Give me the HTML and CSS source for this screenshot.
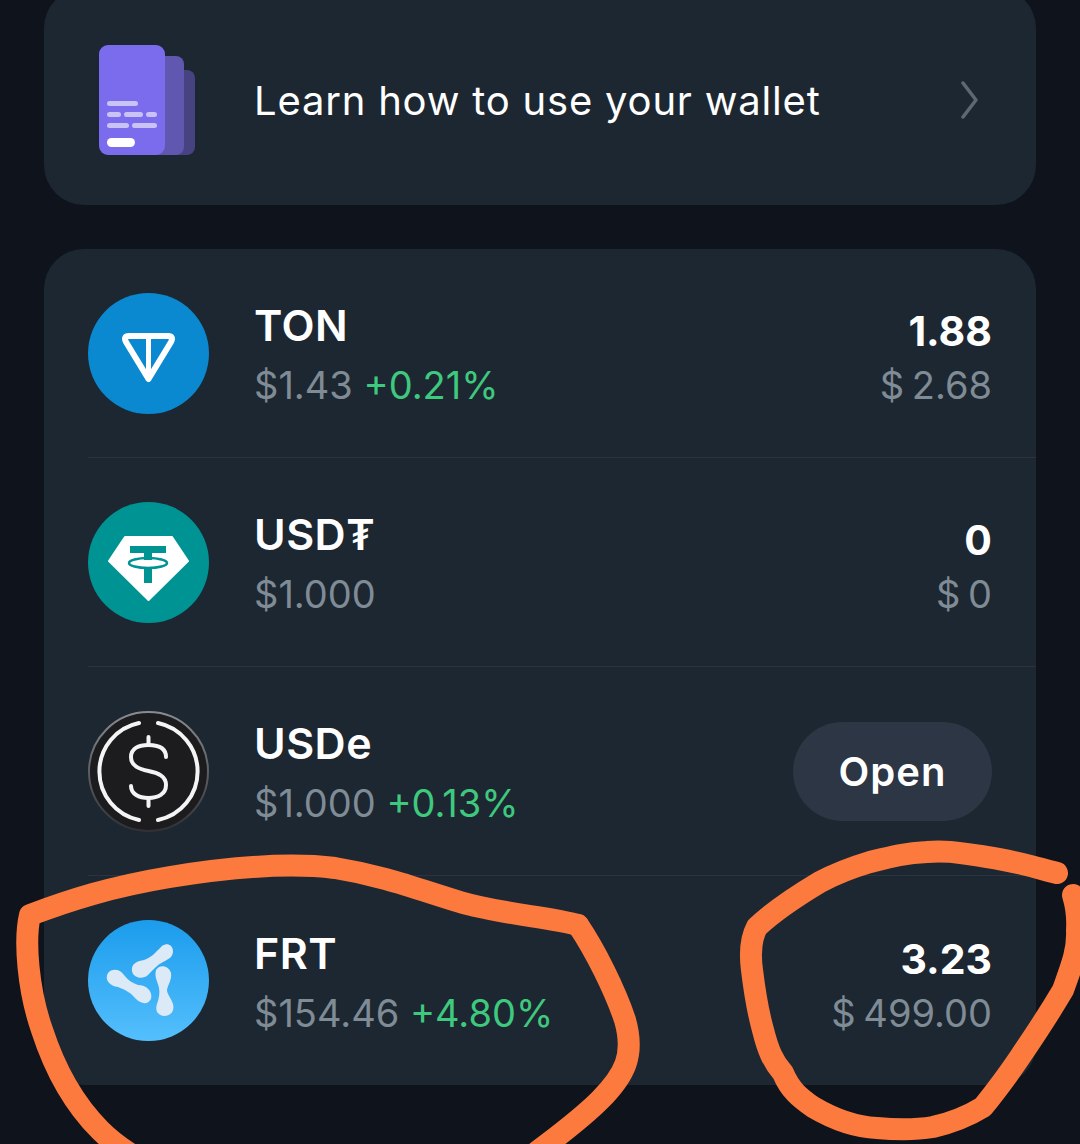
FILE: index.html
```html
<!DOCTYPE html>
<html lang="en">
<head>
    <meta charset="UTF-8">
    <meta name="viewport" content="width=device-width, initial-scale=1.0">
    <title>Wallet</title>
    <link rel="stylesheet" href="styles.css">
</head>
<body>
    <main class="page">
        <section class="card learn">
            <svg class="learn-icon" width="96" height="110" viewBox="0 0 96 110">
                <rect x="50" y="25" width="46" height="85" rx="8" fill="#474280"/>
                <rect x="40" y="11" width="45" height="99" rx="8" fill="#5f57b0"/>
                <rect x="0" y="0" width="66" height="110" rx="9" fill="#7b6cee"/>
                <g fill="#c9c3f5">
                    <rect x="8" y="56" width="31" height="5" rx="2.5"/>
                    <rect x="8" y="67" width="14" height="5" rx="2.5"/>
                    <rect x="25" y="67" width="19" height="5" rx="2.5"/>
                    <rect x="47" y="67" width="11" height="5" rx="2.5"/>
                    <rect x="8" y="78" width="22" height="5" rx="2.5"/>
                    <rect x="33" y="78" width="25" height="5" rx="2.5"/>
                </g>
                <rect x="8" y="93" width="28" height="9" rx="4.5" fill="#fff"/>
            </svg>
            <span class="learn-text">Learn how to use your wallet</span>
            <svg class="chevron" width="18" height="38" viewBox="0 0 18 38">
                <path d="M2 2 L15 19 L2 36" fill="none" stroke="#5d6873" stroke-width="3.500" stroke-linecap="round" stroke-linejoin="round"/>
            </svg>
        </section>

        <section class="card tokens">
            <div class="token">
                <svg class="token-icon" viewBox="0 0 121 121">
                    <circle cx="60.500" cy="60.500" r="60.500" fill="#0a88d0"/>
                    <path d="M41 43 H80 Q86 43 83 49 L60.500 86 L38 49 Q35 43 41 43 Z" fill="none" stroke="#fff" stroke-width="6" stroke-linejoin="round"/>
                    <path d="M60.500 43 V86" fill="none" stroke="#fff" stroke-width="5"/>
                </svg>
                <div class="token-info">
                    <div class="token-name">TON</div>
                    <div class="token-price">$1.43 <span class="up">+0.21%</span></div>
                </div>
                <div class="token-value">
                    <div class="amount">1.88</div>
                    <div class="fiat">$ 2.68</div>
                </div>
            </div>

            <div class="token">
                <svg class="token-icon" viewBox="0 0 121 121">
                    <circle cx="60.500" cy="60.500" r="60.500" fill="#009393"/>
                    <path d="M37 35 H84 L100 59 L60.500 98 L21 59 Z" fill="#fff" stroke="#fff" stroke-width="2" stroke-linejoin="round"/>
                    <path d="M42 44 H78 V51 H64 V58 H56 V51 H42 Z M56 65 H64 V81 H56 Z" fill="#009393"/>
                    <ellipse cx="60" cy="61" rx="19" ry="5" fill="none" stroke="#009393" stroke-width="2.500"/>
                </svg>
                <div class="token-info">
                    <div class="token-name">USD₮</div>
                    <div class="token-price">$1.000</div>
                </div>
                <div class="token-value">
                    <div class="amount">0</div>
                    <div class="fiat">$ 0</div>
                </div>
            </div>

            <div class="token">
                <svg class="token-icon" viewBox="0 0 121 121">
                    <defs>
                        <linearGradient id="usde-ring" x1="0" y1="0" x2="0" y2="1">
                            <stop offset="0" stop-color="#8a8c8f"/>
                            <stop offset="1" stop-color="#303134"/>
                        </linearGradient>
                    </defs>
                    <circle cx="60.500" cy="60.500" r="59.500" fill="#1c1c1f" stroke="url(#usde-ring)" stroke-width="2"/>
                    <g fill="none" stroke="#f4f4f4" stroke-width="4" stroke-linecap="round">
                        <path d="M51 12 A49.500 49.500 0 0 0 51 109"/>
                        <path d="M70 12 A49.500 49.500 0 0 1 70 109"/>
                        <path d="M78 46 C78 37 70 34 60.500 34 C50 34 43 38 43 46 C43 55 51 58 60.500 60 C70 62 78 65 78 74 C78 83 70 87 60.500 87 C51 87 43 83 43 75"/>
                        <path d="M60.500 26 V34 M60.500 87 V95"/>
                    </g>
                </svg>
                <div class="token-info">
                    <div class="token-name">USDe</div>
                    <div class="token-price">$1.000 <span class="up">+0.13%</span></div>
                </div>
                <button class="open-btn">Open</button>
            </div>

            <div class="token">
                <svg class="token-icon" viewBox="0 0 121 121">
                    <defs>
                        <linearGradient id="frt" x1="0" y1="0" x2="0" y2="1">
                            <stop offset="0" stop-color="#1b9cec"/>
                            <stop offset="1" stop-color="#54bffd"/>
                        </linearGradient>
                    </defs>
                    <circle cx="60.500" cy="60.500" r="60.500" fill="url(#frt)"/>
                    <g fill="#dce9f6">
                        <path d="M73 27 C77 22 85 24 85 31 C85 37 81 39 75 42 C69 45 65 50 60 55 C55 60 45 58 44 51 C43 43 50 41 56 40 C63 38 68 32 73 27 Z"/>
                        <path d="M20 53 C24 48 32 49 36 55 C40 60 44 63 50 65 C58 65 65 71 63 79 C60 85 53 84 48 79 C43 73 38 70 30 67 C22 66 16 60 20 53 Z"/>
                        <path d="M68 50 C71 44 81 45 83 53 C84 60 80 64 79 70 C79 74 83 78 85 84 C87 92 82 96 76 96 C69 95 67 90 69 84 C71 78 72 73 71 68 C70 62 66 57 68 50 Z"/>
                    </g>
                </svg>
                <div class="token-info">
                    <div class="token-name">FRT</div>
                    <div class="token-price">$154.46 <span class="up">+4.80%</span></div>
                </div>
                <div class="token-value">
                    <div class="amount">3.23</div>
                    <div class="fiat">$ 499.00</div>
                </div>
            </div>
        </section>
    </main>

    <!-- marker scribbles drawn over the screenshot -->
    <svg class="scribble" width="1080" height="1144" viewBox="0 0 1080 1144">
        <g fill="none" stroke="#fd7a3e" stroke-width="22" stroke-linecap="round" stroke-linejoin="round">
            <path d="M578 925 C550 917 500 914 460 902 C420 890 385 876 335 868 C285 862 225 868 170 877 C110 887 70 900 30 915 C24 940 28 990 42 1030 C55 1070 75 1105 100 1130 C115 1145 130 1155 150 1165"/>
            <path d="M578 925 C595 950 615 990 625 1020 C635 1055 625 1075 600 1100 C575 1125 545 1145 520 1165"/>
            <path d="M1057 873 C1030 866 1010 860 987 857 C960 853 945 850 927 852 C905 853 890 857 870 862 C850 868 835 874 820 882 C795 897 775 910 757 927 C750 940 750 955 752 970 C755 995 758 1012 763 1030 C768 1050 773 1062 783 1073 C790 1090 800 1098 813 1107 C835 1120 855 1127 877 1128 C900 1130 915 1130 933 1127 C955 1122 970 1115 983 1107 C995 1092 1008 1075 1020 1057 C1035 1035 1050 1012 1063 990 C1072 965 1078 950 1077 930 C1078 915 1076 905 1073 895"/>
        </g>
    </svg>
</body>
</html>
```

FILE: styles.css
```css
html, body {
    height: 100%;
}

body {
    margin: 0;
    background-color: #0e131c;
    font-family: Inter, "Noto Sans", Arial, sans-serif;
    color: #fff;
    overflow: hidden;
    position: relative;
}

.page {
    padding: 0 44px;
    display: flex;
    flex-direction: column;
    gap: 44px;
}

.card {
    background-color: #1d2731;
    border-radius: 40px;
}

.learn {
    margin-top: -12px;
    height: 217px;
    box-sizing: border-box;
    padding: 7px 57px 0 55px;
    display: flex;
    align-items: center;
}

.learn-icon {
    flex: none;
}

.learn-text {
    flex: 1;
    margin-left: 59px;
    font-size: 40px;
    letter-spacing: 0.8px;
}

.tokens {
    display: flex;
    flex-direction: column;
    padding-left: 44px;
}

.token {
    height: 209px;
    box-sizing: border-box;
    padding-right: 44px;
    display: flex;
    align-items: center;
    border-bottom: 1px solid #2a333e;
}

.token:last-child {
    border-bottom: none;
}

.token-icon {
    width: 121px;
    height: 121px;
    flex: none;
}

.token-info {
    flex: 1;
    margin-left: 45px;
    padding-top: 5px;
}

.token-name {
    font-size: 43px;
    font-weight: 600;
    line-height: 54px;
    letter-spacing: 0.5px;
}

.token-price {
    margin-top: 5px;
    font-size: 38px;
    line-height: 56px;
    color: #7f8b95;
}

.up {
    color: #3ec97e;
}

.token-value {
    padding-top: 10px;
    text-align: right;
}

.amount {
    font-size: 41px;
    font-weight: 700;
    line-height: 54px;
}

.fiat {
    font-size: 38px;
    line-height: 54px;
    word-spacing: -3px;
    color: #7f8b95;
}

.open-btn {
    width: 199px;
    height: 99px;
    border: none;
    border-radius: 50px;
    background-color: #2c3645;
    color: #fff;
    font-family: inherit;
    font-size: 40px;
    font-weight: 600;
    letter-spacing: 1px;
}

.scribble {
    position: absolute;
    left: 0;
    top: 0;
}
```
